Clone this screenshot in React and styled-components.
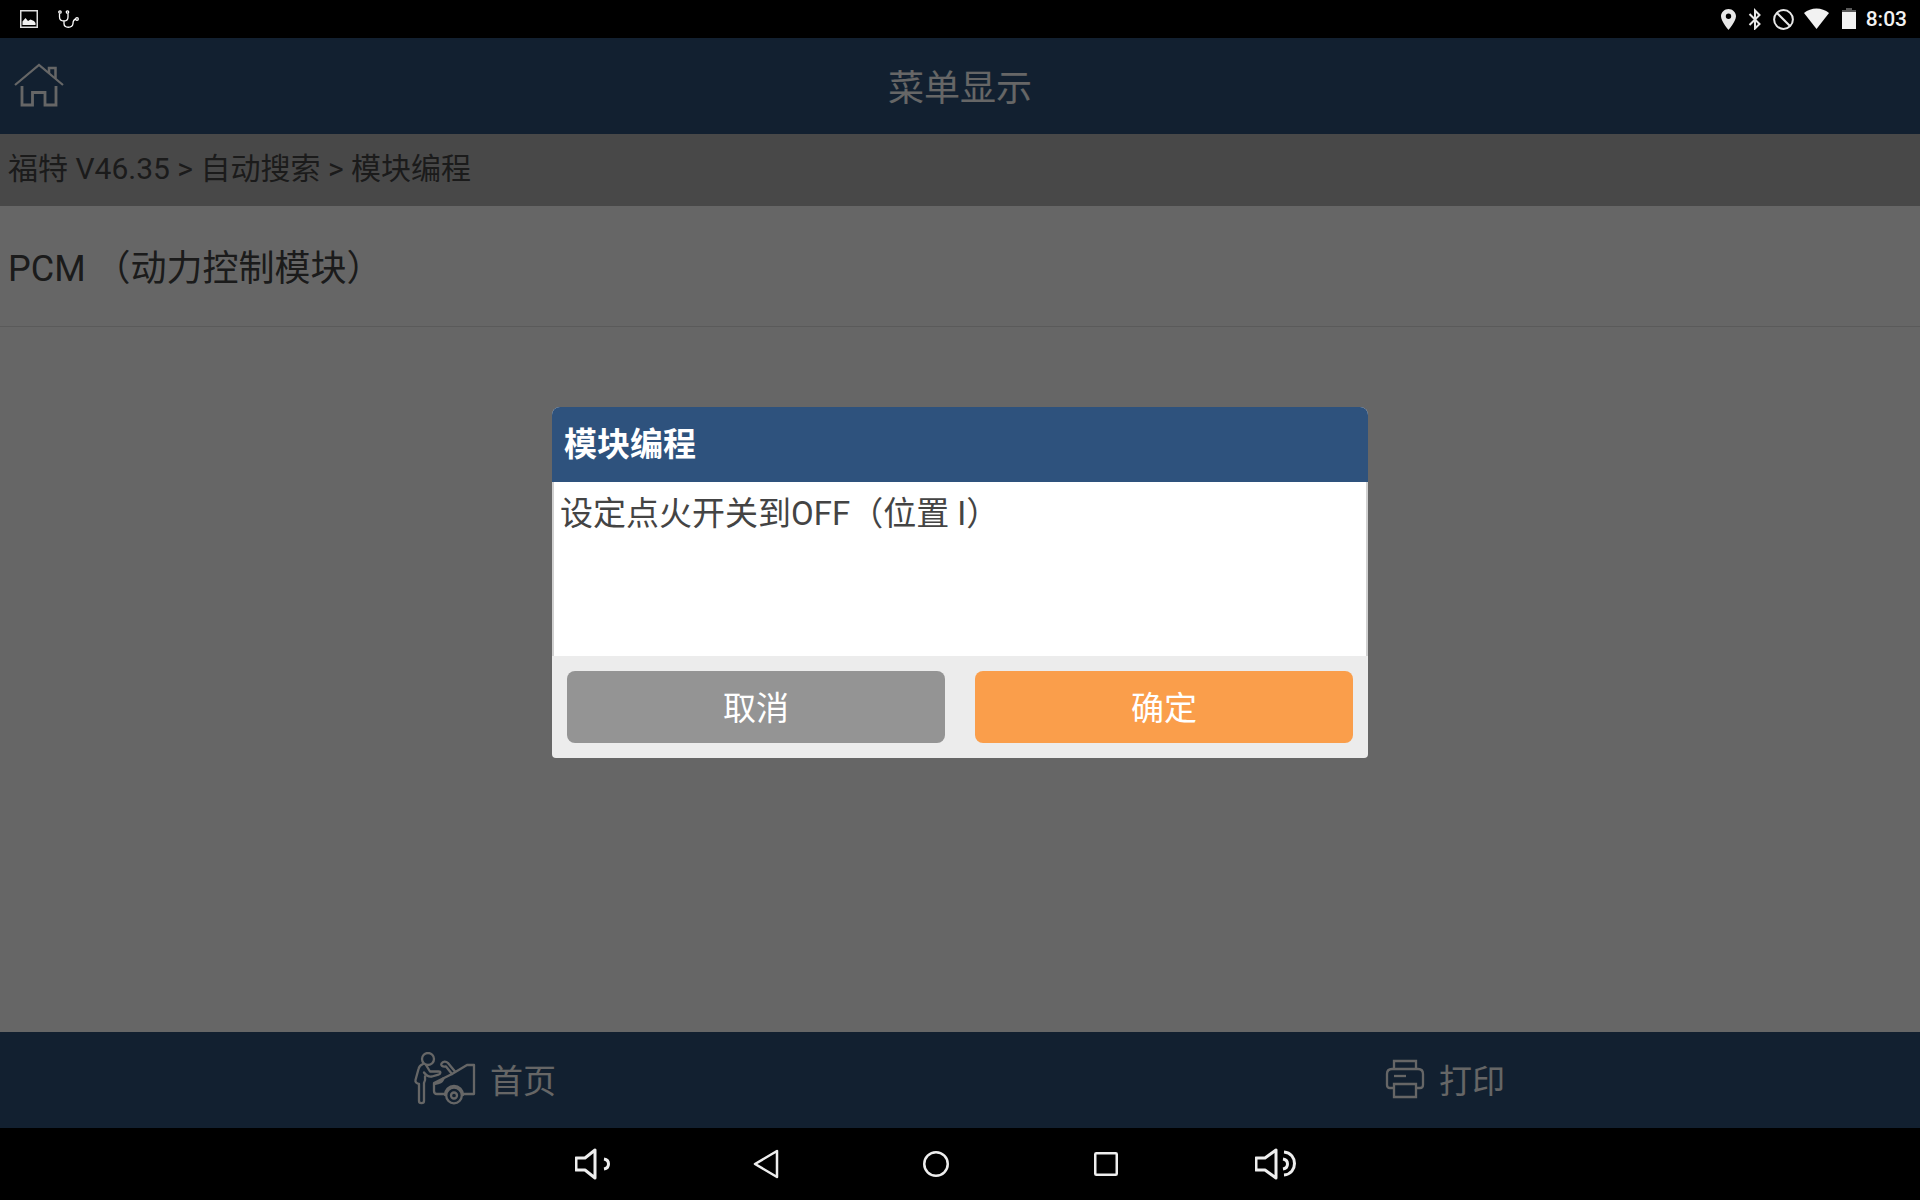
import React from 'react';
import styled, { createGlobalStyle } from 'styled-components';

const crumbs = ['福特 V46.35', '自动搜索', '模块编程'];
const modules = ['PCM （动力控制模块）'];

function StatusIcons() {
  return (
    <StatusGroup>
      <svg width="17" height="22" viewBox="0 0 17 22" aria-hidden="true">
        <path
          fill="#e8e8e8"
          fillRule="evenodd"
          d="M7.500 1C3.400 1 0 4.300 0 8.300 0 13.500 7.500 22 7.500 22S15 13.500 15 8.300C15 4.300 11.600 1 7.500 1zm0 4.600a2.700 2.700 0 1 1 0 5.400 2.700 2.700 0 0 1 0-5.400z"
        />
      </svg>
      <svg width="14" height="22" viewBox="0 0 14 22" aria-hidden="true">
        <path d="M1.500 6l10 10-4.500 4.500v-18L11.500 7l-10 10" fill="none" stroke="#e8e8e8" strokeWidth="2" />
      </svg>
      <svg width="22" height="22" viewBox="0 0 22 22" aria-hidden="true">
        <circle cx="11.500" cy="11.500" r="9.400" fill="none" stroke="#e8e8e8" strokeWidth="2" />
        <path d="M5 5l13 13" stroke="#e8e8e8" strokeWidth="2" />
      </svg>
      <svg width="28" height="22" viewBox="0 0 28 22" aria-hidden="true">
        <path d="M12.500 21L0 5C3.500 2 8 .5 12.500 .5S21.500 2 25 5z" fill="#f2f2f2" />
      </svg>
      <svg width="14" height="22" viewBox="0 0 14 22" aria-hidden="true">
        <path d="M4 0h6v2h4v3H0V2h4z" fill="#5a5a5a" />
        <path d="M0 4h14v17H0z" fill="#f2f2f2" />
      </svg>
      <Clock>8:03</Clock>
    </StatusGroup>
  );
}

function HomeIcon() {
  return (
    <svg width="50" height="48" viewBox="0 0 50 48" fill="none" stroke="#fff" strokeWidth="2.200" aria-hidden="true">
      <path d="M1 24L25 4l24 20" />
      <path d="M35 12V7h6.500v10.500" strokeWidth="2.500" />
      <path d="M8 25v19h10.500V31.500H31V44h11V25" strokeWidth="2.800" />
    </svg>
  );
}

function MechanicIcon() {
  return (
    <svg width="72" height="54" viewBox="0 0 72 54" fill="none" stroke="#fff" strokeWidth="2.300" strokeLinejoin="round" strokeLinecap="round" aria-hidden="true">
      <circle cx="24" cy="7" r="6" />
      <path d="M19 12c-2.500 1-4 2.500-4.500 5l-3 11c-.5 2 1 3.500 3.500 4v17c0 2.800 5 2.800 5 0V31c1-2 1.500-4 1-6.500" />
      <path d="M22 13l4 6.500h8.500c2.500 0 2.500 2.500 0 3.200L28 24.500c-3.500 .5-5.500-.5-8-4" />
      <path d="M41 42h-8c-2 0-3-1-3-3v-8l18-9 15-9h7v29H59" />
      <path d="M48 22l-6-7.500c-4 .5-5.500-1-4.500-3 1.500-2.500 4.500-2.500 6.500-.5l7 8.500" />
      <path d="M31 31.500c5-.5 7-2 8-4.500" strokeWidth="3" />
      <path d="M41 43a9 9 0 0 1 18 0" />
      <circle cx="50" cy="43.500" r="7.800" />
      <circle cx="50" cy="43.500" r="3" />
    </svg>
  );
}

function PrinterIcon() {
  return (
    <svg width="50" height="40" viewBox="0 0 50 40" fill="none" stroke="#fff" strokeWidth="2.300" aria-hidden="true">
      <path d="M19 10V2h22v8" />
      <path d="M19 29h-4c-2 0-3-1-3-3V15c0-3 2-5 5-5h26c3 0 5 2 5 5v11c0 2-1 3-3 3h-4" />
      <path d="M19 25h22v13H19z" />
      <path d="M19 17h12" />
    </svg>
  );
}

function App() {
  return (
    <Screen>
      <GlobalStyle />
      <StatusBar>
        <StatusGroup>
          <svg width="18" height="20" viewBox="0 0 18 20" aria-hidden="true">
            <path d="M.75 1.750h16.500v16.500H.75z" fill="none" stroke="#ddd" strokeWidth="1.500" />
            <path d="M2.500 16v-3.500l3-3.500 2.500 3 2.500-1.500 3.500 1.500 1.500 2v2z" fill="#f2f2f2" />
          </svg>
          <Stethoscope width="22" height="20" viewBox="0 0 22 20" aria-hidden="true">
            <circle cx="2" cy="3" r="1.200" />
            <circle cx="9.500" cy="3" r="1.200" />
            <circle cx="19" cy="10" r="1.300" />
            <path d="M1.500 4.500V8c0 3 2 4 4.500 4s4-1 4-4V4.500M6 12v2.500c0 5 8.500 5 9 0 0-3 .5-4 3-4.500" />
          </Stethoscope>
        </StatusGroup>
        <StatusIcons />
      </StatusBar>

      <Main>
        <Header>
          <HomeButton aria-label="主页">
            <HomeIcon />
          </HomeButton>
          <h1>菜单显示</h1>
        </Header>
        <Breadcrumb>{crumbs.join(' > ')}</Breadcrumb>
        <List>
          {modules.map((name) => (
            <li key={name}>
              <ModuleButton>{name}</ModuleButton>
            </li>
          ))}
        </List>
        <Toolbar>
          <ToolButton>
            <MechanicIcon />
            首页
          </ToolButton>
          <ToolButton>
            <PrinterIcon />
            打印
          </ToolButton>
        </Toolbar>

        <Overlay>
          <Dialog role="dialog" aria-labelledby="dialog-title">
            <DialogTitle id="dialog-title">模块编程</DialogTitle>
            <DialogBody>设定点火开关到OFF（位置 I）</DialogBody>
            <DialogActions>
              <ActionButton $color="#949494">取消</ActionButton>
              <ActionButton $color="#fa9e4b">确定</ActionButton>
            </DialogActions>
          </Dialog>
        </Overlay>
      </Main>

      <NavBar>
        <NavButton aria-label="音量减">
          <svg width="42" height="32" viewBox="0 0 42 32">
            <path d="M1 10h9L20 2v28l-10-8H1z" strokeWidth="3" />
            <path d="M29 11c6 1 6 9 0 10" strokeWidth="3" />
          </svg>
        </NavButton>
        <NavButton aria-label="返回">
          <svg width="28" height="32" viewBox="0 0 28 32">
            <path d="M25 3v26L3 16z" />
          </svg>
        </NavButton>
        <NavButton aria-label="主屏幕">
          <svg width="28" height="28" viewBox="0 0 28 28">
            <circle cx="14" cy="14" r="11.750" />
          </svg>
        </NavButton>
        <NavButton aria-label="最近任务">
          <svg width="26" height="26" viewBox="0 0 26 26">
            <rect x="2.250" y="2.250" width="21.500" height="21.500" rx="1" />
          </svg>
        </NavButton>
        <NavButton aria-label="音量加">
          <svg width="42" height="32" viewBox="0 0 42 32">
            <path d="M1 10h9L21 2v28l-11-8H1z" strokeWidth="3" />
            <path d="M28 11c6 1 6 9 0 10M29 4c14 1 14 22 0 23" strokeWidth="3" />
          </svg>
        </NavButton>
      </NavBar>
    </Screen>
  );
}

const GlobalStyle = createGlobalStyle`
  * {
    box-sizing: border-box;
  }
  body {
    margin: 0;
    background: #000;
  }
  body, button {
    font-family: Roboto, "Noto Sans CJK SC", sans-serif;
  }
  button {
    border: none;
    padding: 0;
    background: none;
    cursor: pointer;
  }
  svg {
    display: block;
    flex: none;
  }
`;

const Screen = styled.div`
  display: flex;
  flex-direction: column;
  min-height: 100vh;
`;

const StatusBar = styled.div`
  display: flex;
  align-items: center;
  justify-content: space-between;
  height: 38px;
  padding: 0 13px 0 20px;
  background: #000;
`;

const StatusGroup = styled.div`
  display: flex;
  align-items: center;
  gap: 10px;
`;

const Stethoscope = styled.svg`
  margin-left: 10px;
  fill: none;
  stroke: #fff;
  stroke-width: 1.3;
`;

const Clock = styled.span`
  color: #f2f2f2;
  font-size: 21px;
  font-weight: 500;
`;

const Main = styled.main`
  position: relative;
  flex: 1;
  display: flex;
  flex-direction: column;
  background: #fff;
`;

const Header = styled.header`
  display: grid;
  grid-template-columns: 80px 1fr 80px;
  align-items: center;
  height: 96px;
  padding-bottom: 2px;
  background: #2d5279;
  color: #fff;

  h1 {
    margin: 0;
    font-size: 36px;
    font-weight: 400;
    text-align: center;
  }
`;

const HomeButton = styled.button`
  padding-left: 14px;
`;

const Breadcrumb = styled.nav`
  height: 72px;
  padding: 0 8px;
  background: #b4b4b4;
  color: #444;
  font-size: 30px;
  line-height: 70px;
`;

const List = styled.ul`
  flex: 1;
  margin: 0;
  padding: 0;
  list-style: none;
`;

const ModuleButton = styled.button`
  width: 100%;
  height: 121px;
  padding: 0 8px 2px;
  border-bottom: 1px solid #e0e0e0;
  color: #444;
  font-size: 36px;
  text-align: left;
`;

const Toolbar = styled.footer`
  display: grid;
  grid-template-columns: 1fr 1fr;
  height: 96px;
  background: #2d5279;
`;

const ToolButton = styled.button`
  display: flex;
  align-items: center;
  justify-content: center;
  gap: 14px;
  padding-bottom: 2px;
  color: #fff;
  font-size: 33px;
`;

const Overlay = styled.div`
  position: absolute;
  inset: 0;
  display: flex;
  align-items: center;
  justify-content: center;
  padding-bottom: 2px;
  background: rgba(0, 0, 0, 0.6);
`;

const Dialog = styled.section`
  width: 816px;
  max-width: 100%;
  border-radius: 8px 8px 4px 4px;
  overflow: hidden;
  background: #ececec;
  font-size: 33px;
`;

const DialogTitle = styled.h2`
  margin: 0;
  padding: 0 12px;
  background: #2e527d;
  color: #fff;
  font-size: 33px;
  font-weight: 700;
  line-height: 75px;
`;

const DialogBody = styled.div`
  min-height: 174px;
  padding: 8px 6px;
  border: solid #d0d0d0;
  border-width: 0 2px;
  background: #fff;
  color: #444;
  line-height: 48px;
`;

const DialogActions = styled.div`
  display: flex;
  gap: 30px;
  padding: 15px;
`;

const ActionButton = styled.button`
  flex: 1;
  height: 72px;
  padding-bottom: 2px;
  border-radius: 8px;
  background: ${(props) => props.$color};
  color: #fff;
  font-size: 33px;
`;

const NavBar = styled.nav`
  display: flex;
  justify-content: center;
  height: 72px;
  padding-right: 48px;
  background: #000;
`;

const NavButton = styled.button`
  display: flex;
  align-items: center;
  justify-content: center;
  width: 170px;

  svg {
    fill: none;
    stroke: #eee;
    stroke-width: 2.5;
    stroke-linejoin: round;
  }
`;

export default App;
